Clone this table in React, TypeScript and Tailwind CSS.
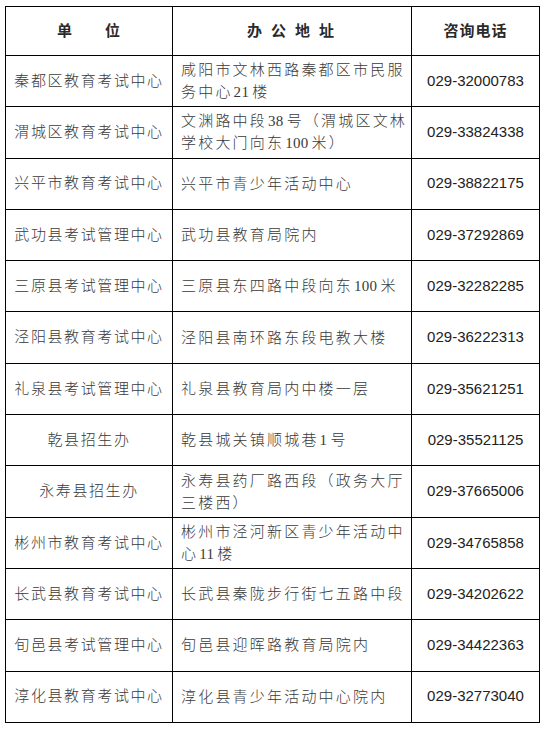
const ROWS: { unit: string; addr: string[]; phone: string }[] = [
  { unit: '秦都区教育考试中心', addr: ['咸阳市文林西路秦都区市民服', '务中心21楼'], phone: '029-32000783' },
  { unit: '渭城区教育考试中心', addr: ['文渊路中段38号（渭城区文林', '学校大门向东100米）'], phone: '029-33824338' },
  { unit: '兴平市教育考试中心', addr: ['兴平市青少年活动中心'], phone: '029-38822175' },
  { unit: '武功县考试管理中心', addr: ['武功县教育局院内'], phone: '029-37292869' },
  { unit: '三原县考试管理中心', addr: ['三原县东四路中段向东100米'], phone: '029-32282285' },
  { unit: '泾阳县教育考试中心', addr: ['泾阳县南环路东段电教大楼'], phone: '029-36222313' },
  { unit: '礼泉县考试管理中心', addr: ['礼泉县教育局内中楼一层'], phone: '029-35621251' },
  { unit: '乾县招生办', addr: ['乾县城关镇顺城巷1号'], phone: '029-35521125' },
  { unit: '永寿县招生办', addr: ['永寿县药厂路西段（政务大厅', '三楼西）'], phone: '029-37665006' },
  { unit: '彬州市教育考试中心', addr: ['彬州市泾河新区青少年活动中', '心11楼'], phone: '029-34765858' },
  { unit: '长武县教育考试中心', addr: ['长武县秦陇步行街七五路中段'], phone: '029-34202622' },
  { unit: '旬邑县考试管理中心', addr: ['旬邑县迎晖路教育局院内'], phone: '029-34422363' },
  { unit: '淳化县教育考试中心', addr: ['淳化县青少年活动中心院内'], phone: '029-32773040' },
];

const SERIF = "font-['Liberation_Serif','Noto_Sans_CJK_SC',serif]";

// digits sit in the Chinese text with a small gap on each side
function AddrLine({ text }: { text: string }) {
  return (
    <div className="whitespace-nowrap">
      {text.split(/(\d+)/).map((part, i) =>
        /^\d+$/.test(part) ? (
          <span key={i} className="tracking-[0.3px] ml-[1px] mr-[3px]">
            {part}
          </span>
        ) : (
          <span key={i}>{part}</span>
        ),
      )}
    </div>
  );
}

export default function App() {
  return (
    <div className="w-[545px] h-[730px] bg-white pt-[6px] pl-[5px]">
      <table className={`table-fixed w-[534px] border-collapse text-[#2a2a2a] ${SERIF}`}>
        <colgroup>
          <col className="w-[167px]" />
          <col className="w-[239px]" />
          <col className="w-[128px]" />
        </colgroup>
        <thead>
          <tr className="h-[49px]">
            <th className="border-[1.5px] border-black text-[15px] font-bold text-center tracking-[1px]">
              单&emsp;&emsp;位
            </th>
            <th className="border-[1.5px] border-black text-[15px] font-bold text-center tracking-[9px] pl-[6px]">
              办公地址
            </th>
            <th className="border-[1.5px] border-black text-[15px] font-bold text-center tracking-[1px]">
              咨询电话
            </th>
          </tr>
        </thead>
        <tbody>
          {ROWS.map((r) => (
            <tr key={r.phone} className="h-[51.3px]">
              <td className="border-[1.5px] border-black text-[15px] text-center tracking-[1.6px] font-light text-[#3a3a3a] whitespace-nowrap">
                {r.unit}
              </td>
              <td className="border-[1.5px] border-black text-[15px] leading-[22px] pl-[8px] tracking-[2.2px] font-light text-[#3a3a3a]">
                {r.addr.map((line) => (
                  <AddrLine key={line} text={line} />
                ))}
              </td>
              <td className="border-[1.5px] border-black text-[15px] text-center text-[#222] font-['Liberation_Sans',sans-serif]">
                {r.phone}
              </td>
            </tr>
          ))}
        </tbody>
      </table>
    </div>
  );
}
